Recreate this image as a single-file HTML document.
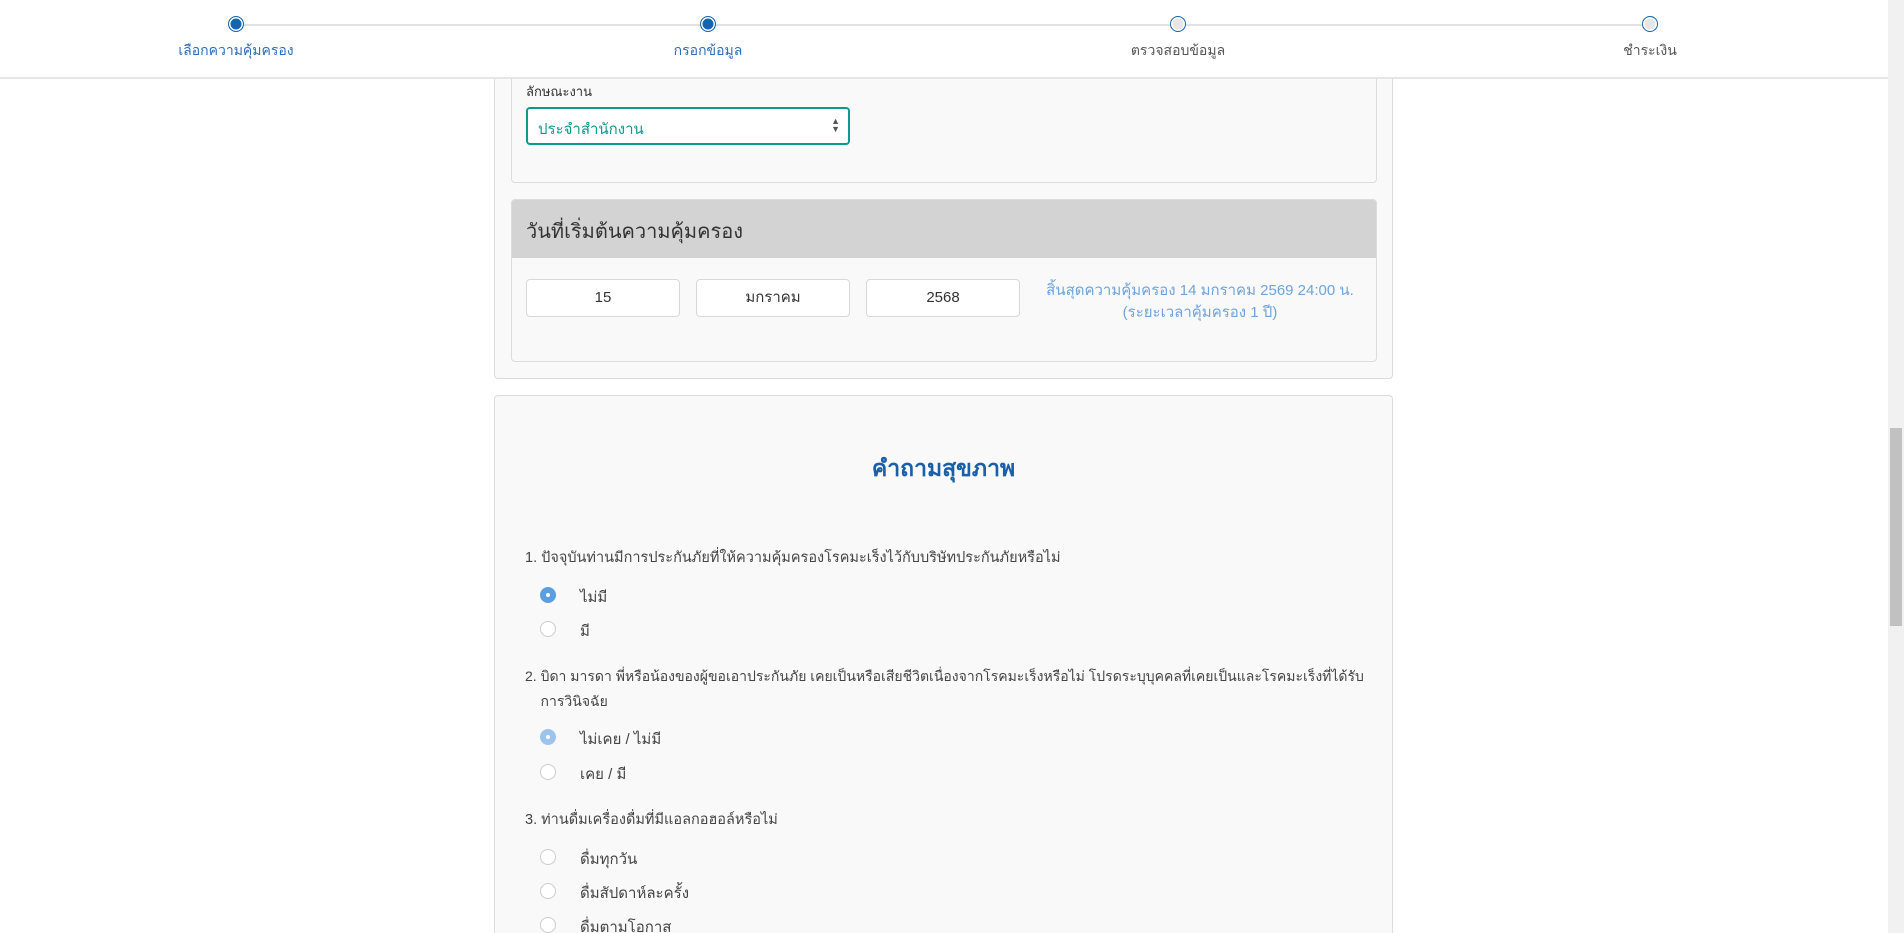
<!DOCTYPE html>
<html><head><meta charset="utf-8"><style>
*{box-sizing:border-box;margin:0;padding:0}
html{width:1904px;height:933px;overflow:hidden}
body{width:1904px;height:933px;overflow:hidden;background:#fff;font-family:"Liberation Sans","DejaVu Sans",sans-serif;color:#444;position:relative}
.abs{position:absolute}
.hdr{left:0;top:0;width:1888px;height:79px;background:#fff;border-bottom:2px solid #e6e6e6;z-index:5}
.line{top:24px;height:2px;background:#e2e2e2}
.dot{width:16px;height:16px;border-radius:50%;border:1.5px solid #1565b0;box-shadow:inset 0 0 0 1.5px #fff;top:16px}
.dot.on{background:#1565b0}
.dot.off{background:#e6e6e6}
.lbl{top:40px;font-size:14px;transform:translateX(-50%);white-space:nowrap}
.sb{left:1888px;top:0;width:16px;height:933px;background:#f1f1f1}
.thumb{left:1890px;top:428px;width:12px;height:198px;background:#c1c1c1}
.card{background:#f9f9f9;border:1px solid #dcdcdc;border-radius:4px}
.sel{left:526px;top:107px;width:324px;height:38px;border:2px solid #0a9b8e;border-radius:4px;background:#fff;color:#0a9b8e;font-size:15px;padding:8px 10px}
.inp{top:279px;width:154px;height:38px;border:1px solid #d8d8d8;border-radius:4px;background:#fff;font-size:15px;text-align:center;line-height:36px;color:#333}
.q{font-size:14.5px;color:#444;left:525px;white-space:nowrap}
.r{left:540px;width:16px;height:16px;border-radius:50%;border:1px solid #ccc;background:#fff}
.r.c{background:#5a9fe0;border-color:#5a9fe0}
.r.c::after{content:"";position:absolute;left:5px;top:5px;width:4px;height:4px;border-radius:50%;background:#fff}
.r.c2{background:#9cc4ec;border-color:#9cc4ec}
.r.c2::after{content:"";position:absolute;left:5px;top:5px;width:4px;height:4px;border-radius:50%;background:#fff}
.o{left:580px;font-size:15px;color:#444}
</style></head><body>
<div class="abs hdr">
 <div class="abs line" style="left:236px;width:1414px"></div>
 <div class="abs dot on" style="left:228px"></div>
 <div class="abs dot on" style="left:700px"></div>
 <div class="abs dot off" style="left:1170px"></div>
 <div class="abs dot off" style="left:1642px"></div>
 <div class="abs lbl" style="left:236px;color:#2a6ebb">เลือกความคุ้มครอง</div>
 <div class="abs lbl" style="left:708px;color:#2a6ebb">กรอกข้อมูล</div>
 <div class="abs lbl" style="left:1178px;color:#555">ตรวจสอบข้อมูล</div>
 <div class="abs lbl" style="left:1650px;color:#555">ชำระเงิน</div>
</div>
<div class="abs sb"></div><div class="abs thumb"></div>

<div class="abs card" style="left:494px;top:40px;width:899px;height:339px"></div>
<div class="abs card" style="left:511px;top:40px;width:866px;height:143px"></div>
<div class="abs" style="left:526px;top:81px;font-size:13px;color:#333">ลักษณะงาน</div>
<div class="abs sel">ประจำสำนักงาน<span style="position:absolute;right:8px;top:8px;font-size:9px;color:#555;line-height:8px">▲<br>▼</span></div>

<div class="abs card" style="left:511px;top:199px;width:866px;height:163px;overflow:hidden">
 <div style="height:58px;background:#d3d3d3;font-size:20px;color:#333;padding:15px 14px">วันที่เริ่มต้นความคุ้มครอง</div>
</div>
<div class="abs inp" style="left:526px">15</div>
<div class="abs inp" style="left:696px">มกราคม</div>
<div class="abs inp" style="left:866px">2568</div>
<div class="abs" style="left:1040px;width:320px;top:280px;text-align:center;color:#6fa3dc;font-size:15px;line-height:22px;white-space:nowrap">สิ้นสุดความคุ้มครอง 14 มกราคม 2569 24:00 น.<br>(ระยะเวลาคุ้มครอง 1 ปี)</div>

<div class="abs card" style="left:494px;top:395px;width:899px;height:538px;border-bottom:none;border-radius:4px 4px 0 0"></div>
<div class="abs" style="left:494px;width:899px;top:451px;text-align:center;font-size:23px;font-weight:bold;color:#1a5fa8">คำถามสุขภาพ</div>
<div class="abs q" style="top:546px">1. ปัจจุบันท่านมีการประกันภัยที่ให้ความคุ้มครองโรคมะเร็งไว้กับบริษัทประกันภัยหรือไม่</div>
<div class="abs r c" style="top:587px"></div><div class="abs o" style="top:585px">ไม่มี</div>
<div class="abs r" style="top:621px"></div><div class="abs o" style="top:619px">มี</div>
<div class="abs q" style="top:664px;line-height:25px;font-size:14px">2. บิดา มารดา พี่หรือน้องของผู้ขอเอาประกันภัย เคยเป็นหรือเสียชีวิตเนื่องจากโรคมะเร็งหรือไม่ โปรดระบุบุคคลที่เคยเป็นและโรคมะเร็งที่ได้รับ<br>&nbsp;&nbsp;&nbsp;&nbsp;การวินิจฉัย</div>
<div class="abs r c2" style="top:729px"></div><div class="abs o" style="top:727px">ไม่เคย / ไม่มี</div>
<div class="abs r" style="top:764px"></div><div class="abs o" style="top:762px">เคย / มี</div>
<div class="abs q" style="top:808px">3. ท่านดื่มเครื่องดื่มที่มีแอลกอฮอล์หรือไม่</div>
<div class="abs r" style="top:849px"></div><div class="abs o" style="top:847px">ดื่มทุกวัน</div>
<div class="abs r" style="top:883px"></div><div class="abs o" style="top:881px">ดื่มสัปดาห์ละครั้ง</div>
<div class="abs r" style="top:917px"></div><div class="abs o" style="top:915px">ดื่มตามโอกาส</div>
</body></html>
